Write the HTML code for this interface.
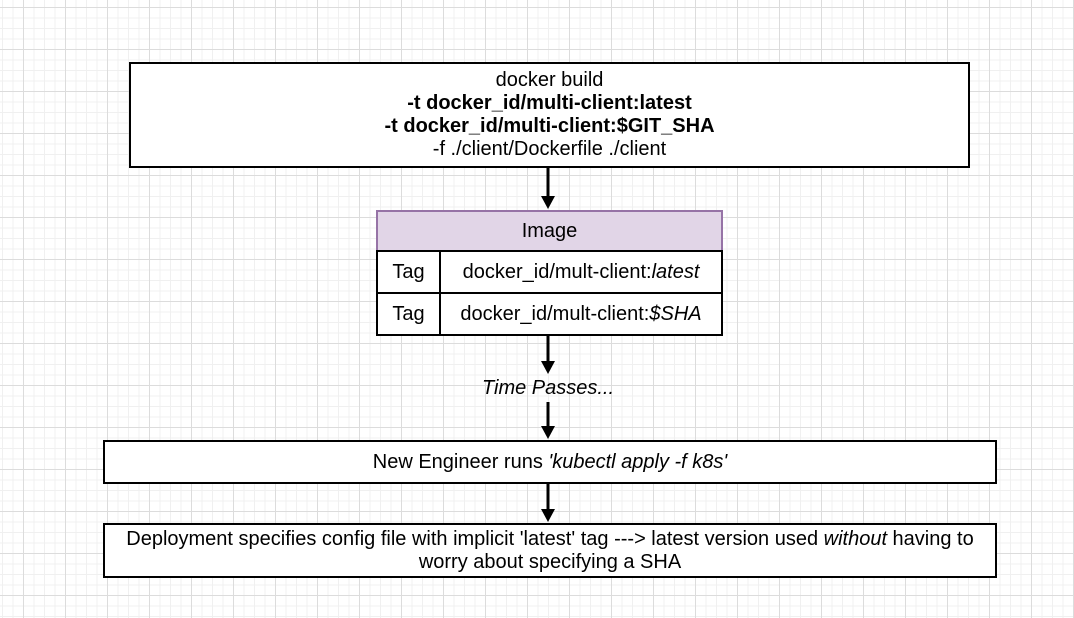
<!DOCTYPE html>
<html><head><style>
html,body{margin:0;padding:0}
body{width:1074px;height:618px;position:relative;overflow:hidden;background:#fff;
background-image:
linear-gradient(#dcdcdc 1px,transparent 1px),
linear-gradient(90deg,#dcdcdc 1px,transparent 1px),
linear-gradient(#f0f0f0 1px,transparent 1px),
linear-gradient(90deg,#f0f0f0 1px,transparent 1px);
background-size:42px 42px,42px 42px,10.5px 10.5px,10.5px 10.5px;
background-position:0 7px,23px 0,0 7px,23px 0;
font-family:"Liberation Sans",Arial,sans-serif;font-size:20px;color:#000}
.b{position:absolute;border:2px solid #000;background:#fff;box-sizing:border-box;text-align:center;line-height:23px}
.c{position:absolute;box-sizing:border-box;display:flex;align-items:center;justify-content:center;white-space:nowrap}
</style></head><body>
<div class="b" style="left:129px;top:62px;width:841px;height:106px;padding-top:5px;line-height:23px">
<div>docker build</div><div><b>-t docker_id/multi-client:latest</b></div><div><b>-t docker_id/multi-client:$GIT_SHA</b></div><div>-f ./client/Dockerfile ./client</div></div>

<div style="position:absolute;left:376px;top:210px;width:347px;height:126px;box-sizing:border-box;border:2px solid #000;border-top:none;background:#fff">
<div class="c" style="left:-2px;top:0;width:347px;height:41px;background:#e1d5e7;border:2px solid #9673a6;border-bottom:none;box-sizing:border-box">Image</div>
<div style="position:absolute;left:-2px;top:40px;width:347px;height:2px;background:#000"></div>
<div style="position:absolute;left:-2px;top:82px;width:347px;height:2px;background:#000"></div>
<div style="position:absolute;left:61px;top:40px;width:2px;height:84px;background:#000"></div>
<div class="c" style="left:0;top:42px;width:61px;height:40px">Tag</div>
<div class="c" style="left:0;top:84px;width:61px;height:40px">Tag</div>
<div class="c" style="left:63px;top:42px;width:280px;height:40px">docker_id/mult-client:<i>latest</i></div>
<div class="c" style="left:63px;top:84px;width:280px;height:40px">docker_id/mult-client:<i>$SHA</i></div>
</div>

<div class="c" style="left:448px;top:376px;width:200px;height:24px"><i>Time Passes...</i></div>

<div class="b" style="left:103px;top:440px;width:894px;height:44px;line-height:40px">New Engineer runs <i>'kubectl apply -f k8s'</i></div>
<div class="b" style="left:103px;top:523px;width:894px;height:55px;padding-top:3px">Deployment specifies config file with implicit 'latest' tag ---&gt; latest version used <i>without</i> having to<br>worry about specifying a SHA</div>

<svg width="1074" height="618" style="position:absolute;left:0;top:0" >
<g stroke="#000" stroke-width="3" fill="none">
<line x1="548" y1="168" x2="548" y2="200"/>
<line x1="548" y1="336" x2="548" y2="364"/>
<line x1="548" y1="402" x2="548" y2="430"/>
<line x1="548" y1="484" x2="548" y2="513"/>
</g>
<g fill="#000">
<polygon points="541,196 555,196 548,209"/>
<polygon points="541,361 555,361 548,374"/>
<polygon points="541,426 555,426 548,439"/>
<polygon points="541,509 555,509 548,522"/>
</g>
</svg>
</body></html>
